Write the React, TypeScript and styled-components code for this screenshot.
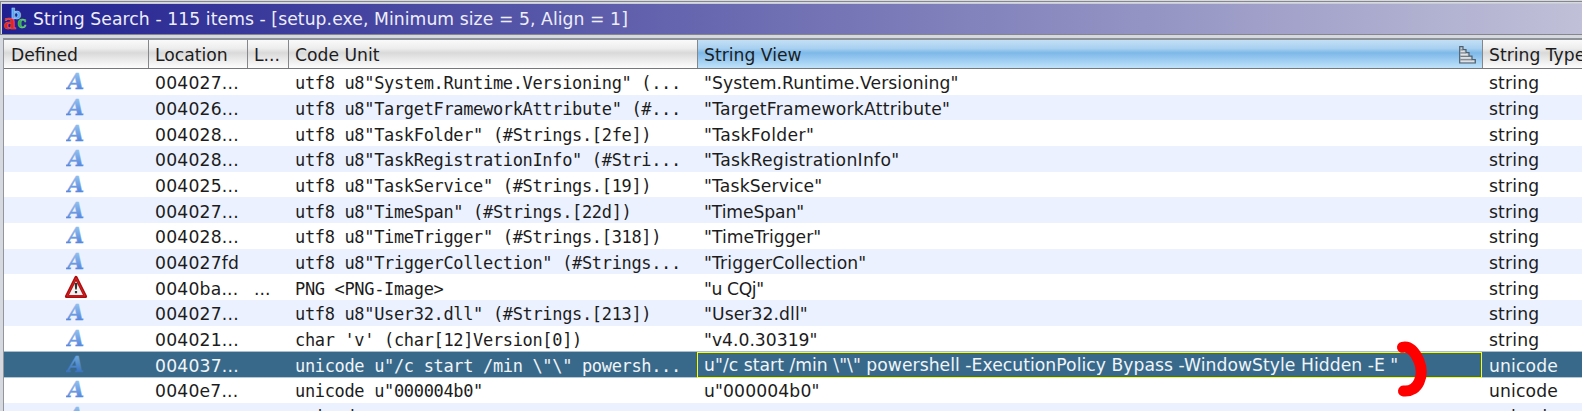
import React from "react";
import styled, { createGlobalStyle, css } from "styled-components";

const Global = createGlobalStyle`
  * { box-sizing: border-box; }
  html, body { margin: 0; height: 412px; overflow: hidden; background: #fff; }
`;

const Window = styled.div`
  width: 1582px;
  height: 411px;
  overflow: hidden;
  display: flex;
  flex-direction: column;
  background: #d6d9df;
  color: #1c1c1c;
  font: 17.2px "DejaVu Sans", sans-serif;
  white-space: pre;
`;

const TitleBar = styled.header`
  flex: none;
  height: 34px;
  margin-top: 1px;
  border: 1px solid #85878c;
  border-right: 0;
  padding: 1px 0 0 1px;
`;

const TitleFill = styled.div`
  height: 31px;
  display: flex;
  align-items: center;
  border-top: 1px solid #c9cbd6;
  background: linear-gradient(90deg, #202090, #c0c0d8);
  color: #eeeefa;
`;

const TitleText = styled.span`
  margin-left: 4px;
  padding-bottom: 1px;
  letter-spacing: 0.08px;
`;

const Table = styled.main`
  flex: 1;
  min-height: 0;
  margin: 3px 0 0 3px;
  border-left: 1px solid #92959b;
  border-top: 2px solid #8e9299;
  background: #fff;
`;

const columns = css`
  display: grid;
  grid-template-columns: 145px 99px 41px 409px 785px 106px;
`;

const HeaderRow = styled.div`
  ${columns}
  height: 29px;
  border-bottom: 1px solid #75777b;
`;

const HeaderCell = styled.div<{ $sorted?: boolean }>`
  display: flex;
  align-items: center;
  justify-content: space-between;
  padding: 1px 6px 0;
  border-right: 1px solid #85878a;
  overflow: hidden;
  background: ${(p) =>
    p.$sorted
      ? "linear-gradient(#c3e0f5 0%, #a8d0f0 30%, #7db8e8 46%, #91c5ee 62%, #c0e3fa 100%)"
      : "linear-gradient(#fafafa 0%, #ededee 30%, #d9d9da 46%, #e5e5e6 62%, #fdfdfd 100%)"};

  &:first-child {
    padding-left: 7px;
  }
`;

const Row = styled.div<{ $odd: boolean; $selected?: boolean }>`
  ${columns}
  height: 25.667px;
  background: ${(p) => (p.$selected ? "#39698a" : p.$odd ? "#ebf1fe" : "#fff")};
  color: ${(p) => (p.$selected ? "#f0f5f8" : "#1c1c1c")};
  ${(p) =>
    p.$selected &&
    css`
      position: relative;
      box-shadow: inset 0 1px 0 #a9bfcd, 0 1px 0 #b4c7d3;
    `}
`;

const Cell = styled.div<{ $focus?: boolean; $center?: boolean; $track?: number }>`
  display: flex;
  align-items: center;
  justify-content: ${(p) => (p.$center ? "center" : "flex-start")};
  padding: ${(p) => (p.$center ? "0 2px 0 0" : "3px 0 0 6px")};
  letter-spacing: ${(p) => p.$track ?? 0}px;
  overflow: hidden;
  ${(p) =>
    p.$focus &&
    css`
      margin: 1px 1px -1px -1px;
      border: 1px solid #ffff00;
      padding: 0 0 0 6px;
    `}
`;

const Mono = styled.span`
  font: 17px "DejaVu Sans Mono", monospace;
  letter-spacing: -0.34px;
`;

const LetterIcon = ({ selected }: { selected?: boolean }) => (
  <svg width="20" height="25" viewBox="0 0 20 25">
    <defs>
      <linearGradient id={selected ? "ls" : "ln"} x1="0" y1="0" x2="0" y2="1">
        <stop offset="0.2" stopColor={selected ? "#6aa5dc" : "#8fbcec"} />
        <stop offset="0.85" stopColor={selected ? "#386fbd" : "#5484dc"} />
      </linearGradient>
    </defs>
    <text
      x="1.6"
      y="19.8"
      textLength="16.6"
      lengthAdjust="spacingAndGlyphs"
      fontFamily="DejaVu Serif"
      fontWeight="bold"
      fontStyle="italic"
      fontSize="21.5"
      fill={`url(#${selected ? "ls" : "ln"})`}
      stroke={`url(#${selected ? "ls" : "ln"})`}
      strokeWidth="0.4"
    >
      A
    </text>
  </svg>
);

const WarningIcon = () => (
  <svg width="24" height="24" viewBox="0 0 24 24">
    <path d="M12 2.5 21.5 21.5H2.5Z" fill="#f1f1f1" stroke="#a90e10" strokeWidth="3.2" strokeLinejoin="round" />
    <path d="M12 3 21 21H3Z" fill="none" stroke="#d82224" strokeWidth="1" strokeLinejoin="round" />
    <path d="M10.6 8h2.8l-.6 6.5h-1.6ZM10.9 16h2.2v2.2h-2.2Z" fill="#333" />
  </svg>
);

const AbcIcon = () => (
  <svg width="27" height="28" viewBox="0 0 27 28" fontWeight="bold" strokeWidth="0.6">
    <text x="8.8" y="13.8" fontFamily="DejaVu Sans" fontSize="14.5" fill="#55a7ee" stroke="#a6d5fc">b</text>
    <text x="1.6" y="24.4" fontFamily="DejaVu Serif" fontSize="20" textLength="12.4" lengthAdjust="spacingAndGlyphs" fill="#e32422" stroke="#f05a50">a</text>
    <text x="15.4" y="23" fontFamily="DejaVu Serif" fontSize="17" textLength="9" lengthAdjust="spacingAndGlyphs" fill="#2cae3b" stroke="#74d67e">c</text>
  </svg>
);

const SortIcon = () => (
  <svg width="17" height="18" viewBox="0 0 17 18">
    <path d="M.7 .7h3.3v3h3v3h3v3.5h3v3.4h3.3v3.4H.7Z" fill="#c6cbd0" stroke="#4d6070" strokeWidth="1.2" />
    <path d="M1.5 4H4M1.5 7H7M1.5 10.4h8.5M1.5 13.8H13" stroke="#69737c" strokeWidth="1" />
    <path d="M1.6 5.2h3.8M1.6 8.3h6.8M1.6 11.8h9.8M1.6 15.2h13.4" stroke="#e9eaeb" strokeWidth="1" />
  </svg>
);

const Marker = styled.svg`
  position: absolute;
  left: 1390px;
  top: 335px;
`;

type Item = {
  loc: string;
  label?: string;
  unit: string;
  view: string;
  track?: number;
  type?: string;
  warn?: boolean;
  sel?: boolean;
};

const items: Item[] = [
  { loc: "004027...", unit: 'utf8 u8"System.Runtime.Versioning" (...', view: '"System.Runtime.Versioning"', track: 0.08 },
  { loc: "004026...", unit: 'utf8 u8"TargetFrameworkAttribute" (#...', view: '"TargetFrameworkAttribute"', track: 0.24 },
  { loc: "004028...", unit: 'utf8 u8"TaskFolder" (#Strings.[2fe])', view: '"TaskFolder"', track: 0.35 },
  { loc: "004028...", unit: 'utf8 u8"TaskRegistrationInfo" (#Stri...', view: '"TaskRegistrationInfo"', track: 0.29 },
  { loc: "004025...", unit: 'utf8 u8"TaskService" (#Strings.[19])', view: '"TaskService"', track: 0.15 },
  { loc: "004027...", unit: 'utf8 u8"TimeSpan" (#Strings.[22d])', view: '"TimeSpan"', track: -0.1 },
  { loc: "004028...", unit: 'utf8 u8"TimeTrigger" (#Strings.[318])', view: '"TimeTrigger"' },
  { loc: "004027fd", unit: 'utf8 u8"TriggerCollection" (#Strings...', view: '"TriggerCollection"', track: 0.12 },
  { loc: "0040ba...", label: "...", unit: "PNG <PNG-Image>", view: '"u CQj"', track: -0.4, warn: true },
  { loc: "004027...", unit: 'utf8 u8"User32.dll" (#Strings.[213])', view: '"User32.dll"', track: 0.08 },
  { loc: "004021...", unit: "char 'v' (char[12]Version[0])", view: '"v4.0.30319"' },
  {
    loc: "004037...",
    unit: 'unicode u"/c start /min \\"\\" powersh...',
    view: 'u"/c start /min \\"\\" powershell -ExecutionPolicy Bypass -WindowStyle Hidden -E "',
    track: 0.04,
    type: "unicode",
    sel: true,
  },
  { loc: "0040e7...", unit: 'unicode u"000004b0"', view: 'u"000004b0"', track: 0.12, type: "unicode" },
  { loc: "", unit: "unicode", view: "", type: "unicode" },
];

export default function App() {
  return (
    <Window>
      <Global />
      <TitleBar>
        <TitleFill>
          <AbcIcon />
          <TitleText>String Search - 115 items - [setup.exe, Minimum size = 5, Align = 1]</TitleText>
        </TitleFill>
      </TitleBar>
      <Table>
        <HeaderRow>
          <HeaderCell>Defined</HeaderCell>
          <HeaderCell>Location</HeaderCell>
          <HeaderCell>L...</HeaderCell>
          <HeaderCell>Code Unit</HeaderCell>
          <HeaderCell $sorted>
            String View
            <SortIcon />
          </HeaderCell>
          <HeaderCell>String Type</HeaderCell>
        </HeaderRow>
        {items.map((it, i) => (
          <Row key={i} $odd={i % 2 === 1} $selected={it.sel}>
            <Cell $center>{it.warn ? <WarningIcon /> : <LetterIcon selected={it.sel} />}</Cell>
            <Cell $track={0.2}>{it.loc}</Cell>
            <Cell>{it.label}</Cell>
            <Cell>
              <Mono>{it.unit}</Mono>
            </Cell>
            <Cell $focus={it.sel} $track={it.track}>{it.view}</Cell>
            <Cell $track={0.15}>{it.type ?? "string"}</Cell>
          </Row>
        ))}
      </Table>
      <Marker width="44" height="72" viewBox="0 0 44 72">
        <path
          d="M12.5 12.3C21 10.5 25.5 18 29 26C34.5 40 29 57.5 13.5 56"
          fill="none"
          stroke="#f00"
          strokeWidth="11"
          strokeLinecap="round"
        />
      </Marker>
    </Window>
  );
}
